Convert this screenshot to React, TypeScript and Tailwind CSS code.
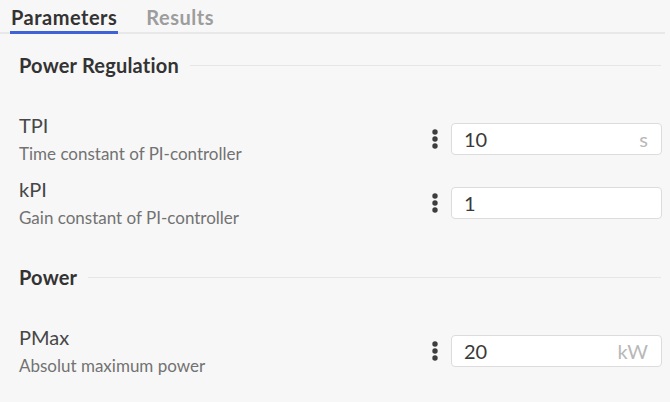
import React from "react";

type Param = { name: string; desc: string; value: string; unit?: string };

const sections: { title: string; params: Param[] }[] = [
  {
    title: "Power Regulation",
    params: [
      { name: "TPI", desc: "Time constant of PI-controller", value: "10", unit: "s" },
      { name: "kPI", desc: "Gain constant of PI-controller", value: "1" },
    ],
  },
  {
    title: "Power",
    params: [{ name: "PMax", desc: "Absolut maximum power", value: "20", unit: "kW" }],
  },
];

function Kebab() {
  return (
    <svg width="6" height="20" viewBox="0 0 6 20" className="shrink-0 text-[#3d3d3d]" fill="currentColor">
      <circle cx="3" cy="3" r="2.7" />
      <circle cx="3" cy="10" r="2.7" />
      <circle cx="3" cy="17" r="2.7" />
    </svg>
  );
}

function ParamRow({ p }: { p: Param }) {
  return (
    <div className="flex items-center h-[64px] pl-[19px] pr-[8px]">
      <div className="flex-1 flex flex-col">
        <span className="text-[20px] leading-[24px] text-[#474747]">{p.name}</span>
        <span className="text-[17px] leading-[22px] text-[#727272] mt-[6px]">{p.desc}</span>
      </div>
      <div className="flex items-center gap-[13px]">
        <Kebab />
        <div className="w-[211px] h-[32px] bg-white border border-[#dcdcdc] rounded-[4px] flex items-center pl-[12px] pr-[13px]">
          <span className="flex-1 text-[20px] leading-[24px] text-[#3a3a3a]">{p.value}</span>
          {p.unit && <span className="text-[20px] leading-[24px] text-[#b8b8b8]">{p.unit}</span>}
        </div>
      </div>
    </div>
  );
}

export default function App() {
  return (
    <div className="w-[670px] h-[402px] bg-[#f7f7f7] overflow-hidden" style={{ fontFamily: "Lato, 'Noto Sans', sans-serif" }}>
      {/* tabs */}
      <div className="flex items-start gap-[28px] pl-[10px] mr-[5px] border-b-2 border-[#e8e8e8]">
        <div className="px-[1px] pt-[5px] pb-[2px] -mb-[2px] text-[20px] leading-[24px] tracking-[0.5px] font-bold text-[#333] border-b-[3px] border-[#3d63d6]">
          Parameters
        </div>
        <div className="pt-[5px] text-[20px] leading-[24px] tracking-[0.5px] font-bold text-[#9d9d9d]">Results</div>
      </div>

      {sections.map((s, i) => (
        <div key={s.title} className={i === 0 ? "mt-[19px]" : "mt-[30px]"}>
          <div className="flex items-center gap-[11px] pl-[19px] pr-[9px] h-[24px] mb-[30px]">
            <span className="text-[20px] leading-[24px] tracking-[0.2px] font-bold text-[#333]">{s.title}</span>
            <div className="flex-1 h-px bg-[#e6e6e6]" />
          </div>
          {s.params.map((p) => (
            <ParamRow key={p.name} p={p} />
          ))}
        </div>
      ))}
    </div>
  );
}
